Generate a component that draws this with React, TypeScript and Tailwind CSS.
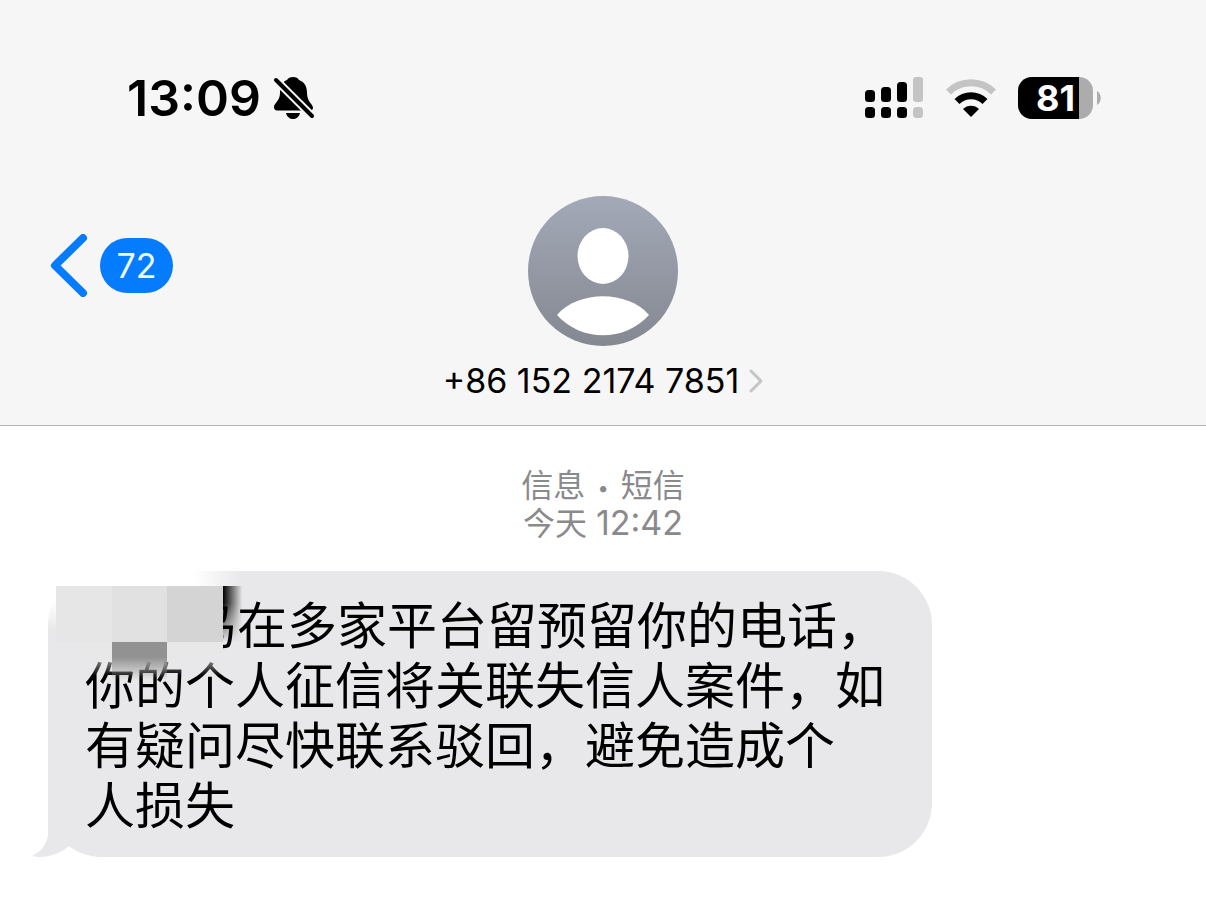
const SANS = "font-['Inter','Noto_Sans_CJK_SC',sans-serif]";

const messageLines = [
  '你的个人征信将关联失信人案件，如',
  '有疑问尽快联系驳回，避免造成个',
  '人损失',
];

function BellOffIcon() {
  return (
    <svg className="h-[44px] w-[42px]" viewBox="0 0 42 44" role="img" aria-label="静音">
      <path
        d="M20 1C23 1 25 2 26 4C32 6 34 11 34 17C34 26 40 28 40 32C40 34 38 34.500 36 34.500H4C2 34.500 1 33 1 31C1 27 7 25 7 17C7 10 9 6 14 4C15 2 17 1 20 1Z"
        fill="#000"
      />
      <path d="M13 37H27C26 41 23 43 20 43C17 43 14 41 13 37Z" fill="#000" />
      <path d="M0 1L41 42" stroke="#f6f6f6" strokeWidth="8" />
      <path d="M3 4L39 40" stroke="#000" strokeWidth="4" strokeLinecap="round" />
    </svg>
  );
}

function SignalIcon() {
  return (
    <svg className="h-[42px] w-[59px]" viewBox="0 0 59 42" role="img" aria-label="信号">
      <g fill="#000">
        <rect x="0" y="13" width="10" height="12" rx="3.5" />
        <rect x="16" y="10" width="10" height="15" rx="3.5" />
        <rect x="32" y="5" width="10" height="20" rx="3.5" />
        <rect x="0" y="30" width="10" height="11" rx="3.5" />
        <rect x="16" y="30" width="10" height="11" rx="3.5" />
        <rect x="32" y="30" width="10" height="11" rx="3.5" />
      </g>
      <g fill="#c4c4c4">
        <rect x="48" y="0" width="10" height="25" rx="3" />
        <rect x="48" y="30" width="10" height="11" rx="3.5" />
      </g>
    </svg>
  );
}

function WifiIcon() {
  return (
    <svg className="h-[40px] w-[50px]" viewBox="0 0 50 40" role="img" aria-label="无线局域网">
      <path d="M2.500 14A32 32 0 0 1 47.500 14" fill="none" stroke="#c4c4c4" strokeWidth="7" />
      <path d="M11 23.500A20 20 0 0 1 39 23.500" fill="none" stroke="#000" strokeWidth="7" />
      <path d="M25 39L17 31C21 26.500 29 26.500 33 31Z" fill="#000" />
    </svg>
  );
}

function Battery({ level }: { level: number }) {
  return (
    <div className="flex items-center gap-1" aria-label={`电量 ${level}%`}>
      <div className="relative flex h-[42px] w-[75px] items-center justify-center overflow-hidden rounded-[14px] bg-[#acacac]">
        <div className="absolute inset-y-0 left-0 bg-black" style={{ width: `${level}%` }} />
        <span className="relative text-[36px] leading-none font-bold text-white">{level}</span>
      </div>
      <svg className="h-[14px] w-[4px]" viewBox="0 0 4 14" aria-hidden="true">
        <path d="M0 0C5 3 5 11 0 14Z" fill="#acacac" />
      </svg>
    </div>
  );
}

function Avatar() {
  return (
    <svg className="size-[150px]" viewBox="0 0 150 150" aria-hidden="true">
      <defs>
        <linearGradient id="avatar" x1="0" y1="0" x2="0" y2="1">
          <stop offset="0" stopColor="#a4a9b8" />
          <stop offset="1" stopColor="#848891" />
        </linearGradient>
      </defs>
      <circle cx="75" cy="75" r="75" fill="url(#avatar)" />
      <ellipse cx="75" cy="60" rx="25.500" ry="28" fill="#fff" />
      <path d="M29 119C50 94 100 94 121 119C97 146 53 146 29 119Z" fill="#fff" />
    </svg>
  );
}

function StatusBar() {
  return (
    <div className="mt-[66px] flex h-16 items-center justify-between pr-[105px] pl-[127px]">
      <div className="flex items-center gap-3">
        <time className="text-[50px] leading-none font-semibold">13:09</time>
        <BellOffIcon />
      </div>
      <div className="flex items-center gap-[22px]">
        <SignalIcon />
        <WifiIcon />
        <Battery level={81} />
      </div>
    </div>
  );
}

function NavBar() {
  return (
    <nav className="mt-[66px] grid grid-cols-[1fr_auto_1fr] items-start pb-6">
      <button type="button" className="mt-[38px] ml-[50px] flex items-center gap-3 justify-self-start" aria-label="返回，72 条未读">
        <svg className="h-[63px] w-[38px]" viewBox="0 0 38 63" aria-hidden="true">
          <path d="M33 4L5 31.500L33 59" fill="none" stroke="#057bfd" strokeWidth="8" strokeLinecap="round" strokeLinejoin="round" />
        </svg>
        <span className="flex h-[55px] w-[73px] items-center justify-center rounded-full bg-[#057bfd] text-[34px] leading-none text-[#e9fbff]">
          72
        </span>
      </button>
      <button type="button" className="flex flex-col items-center">
        <Avatar />
        <span className="mt-[15px] flex items-center gap-[10px] text-[34px] leading-10">
          +86 152 2174 7851
          <svg className="h-6 w-[14px]" viewBox="0 0 14 24" aria-hidden="true">
            <path d="M2 2L12 12L2 22" fill="none" stroke="#c5c5c7" strokeWidth="3" strokeLinecap="round" strokeLinejoin="round" />
          </svg>
        </span>
      </button>
    </nav>
  );
}

// Mosaic tiles and soft edges that hide the name at the start of the message
function Redaction() {
  return (
    <div className="absolute top-0 left-0 h-[110px] w-[200px]" aria-hidden="true">
      <div className="absolute top-0 left-0 h-[15px] w-[195px] bg-linear-to-r from-white from-75% to-transparent" />
      <div className="absolute top-0 left-0 h-[60px] w-2 bg-linear-to-b from-white from-50% to-transparent" />
      <div className="absolute top-[71px] left-9 h-[34px] w-[139px] bg-linear-to-b from-[#e8e8e9] from-20% to-transparent" />
      <div className="absolute top-[71px] left-16 h-[38px] w-[55px] bg-linear-to-b from-[#929292] from-40% to-transparent" />
      <div className="absolute top-[15px] left-[175px] h-[56px] w-6 bg-linear-to-r from-black to-transparent to-80% mask-b-from-30%" />
      <div className="absolute top-[15px] left-2 flex h-[56px] w-[167px]">
        <div className="flex-1 bg-[#e6e6e6]" />
        <div className="flex-1 bg-[#e1e1e1]" />
        <div className="flex-1 bg-[#d4d4d4]" />
      </div>
    </div>
  );
}

function MessageBubble() {
  return (
    <div className="relative mt-7 ml-12 w-fit rounded-[54px] bg-[#e8e8ea] pt-[25px] pr-[45px] pb-[21px] pl-[37px]">
      <svg className="absolute bottom-0 -left-4 h-[60px] w-[84px]" viewBox="0 0 84 60" aria-hidden="true">
        <path d="M16 0V36C16 46 10 54 0 59C14 62 28 57 37 49C46 56 60 60 84 60V0Z" fill="#e8e8ea" />
      </svg>
      <p className="relative text-[50px] leading-[60px] text-black">
        <span className="block pl-[102px]">鸟在多家平台留预留你的电话，</span>
        {messageLines.map((line) => (
          <span key={line} className="block">{line}</span>
        ))}
      </p>
      <Redaction />
    </div>
  );
}

export default function App() {
  return (
    <div className={`min-h-screen bg-white text-black ${SANS}`}>
      <header className="flow-root border-b border-[#b2b2b2] bg-[#f6f6f6]">
        <StatusBar />
        <NavBar />
      </header>
      <main className="pt-[41px] pb-16">
        <div className="text-center text-[32px] leading-[38px] text-[#8a8a8c]">
          <p>
            信息 <span className="mx-[3px] align-middle text-[20px] leading-none">•</span> 短信
          </p>
          <p>
            今天 <time className="text-[34px] leading-none">12:42</time>
          </p>
        </div>
        <MessageBubble />
      </main>
    </div>
  );
}
